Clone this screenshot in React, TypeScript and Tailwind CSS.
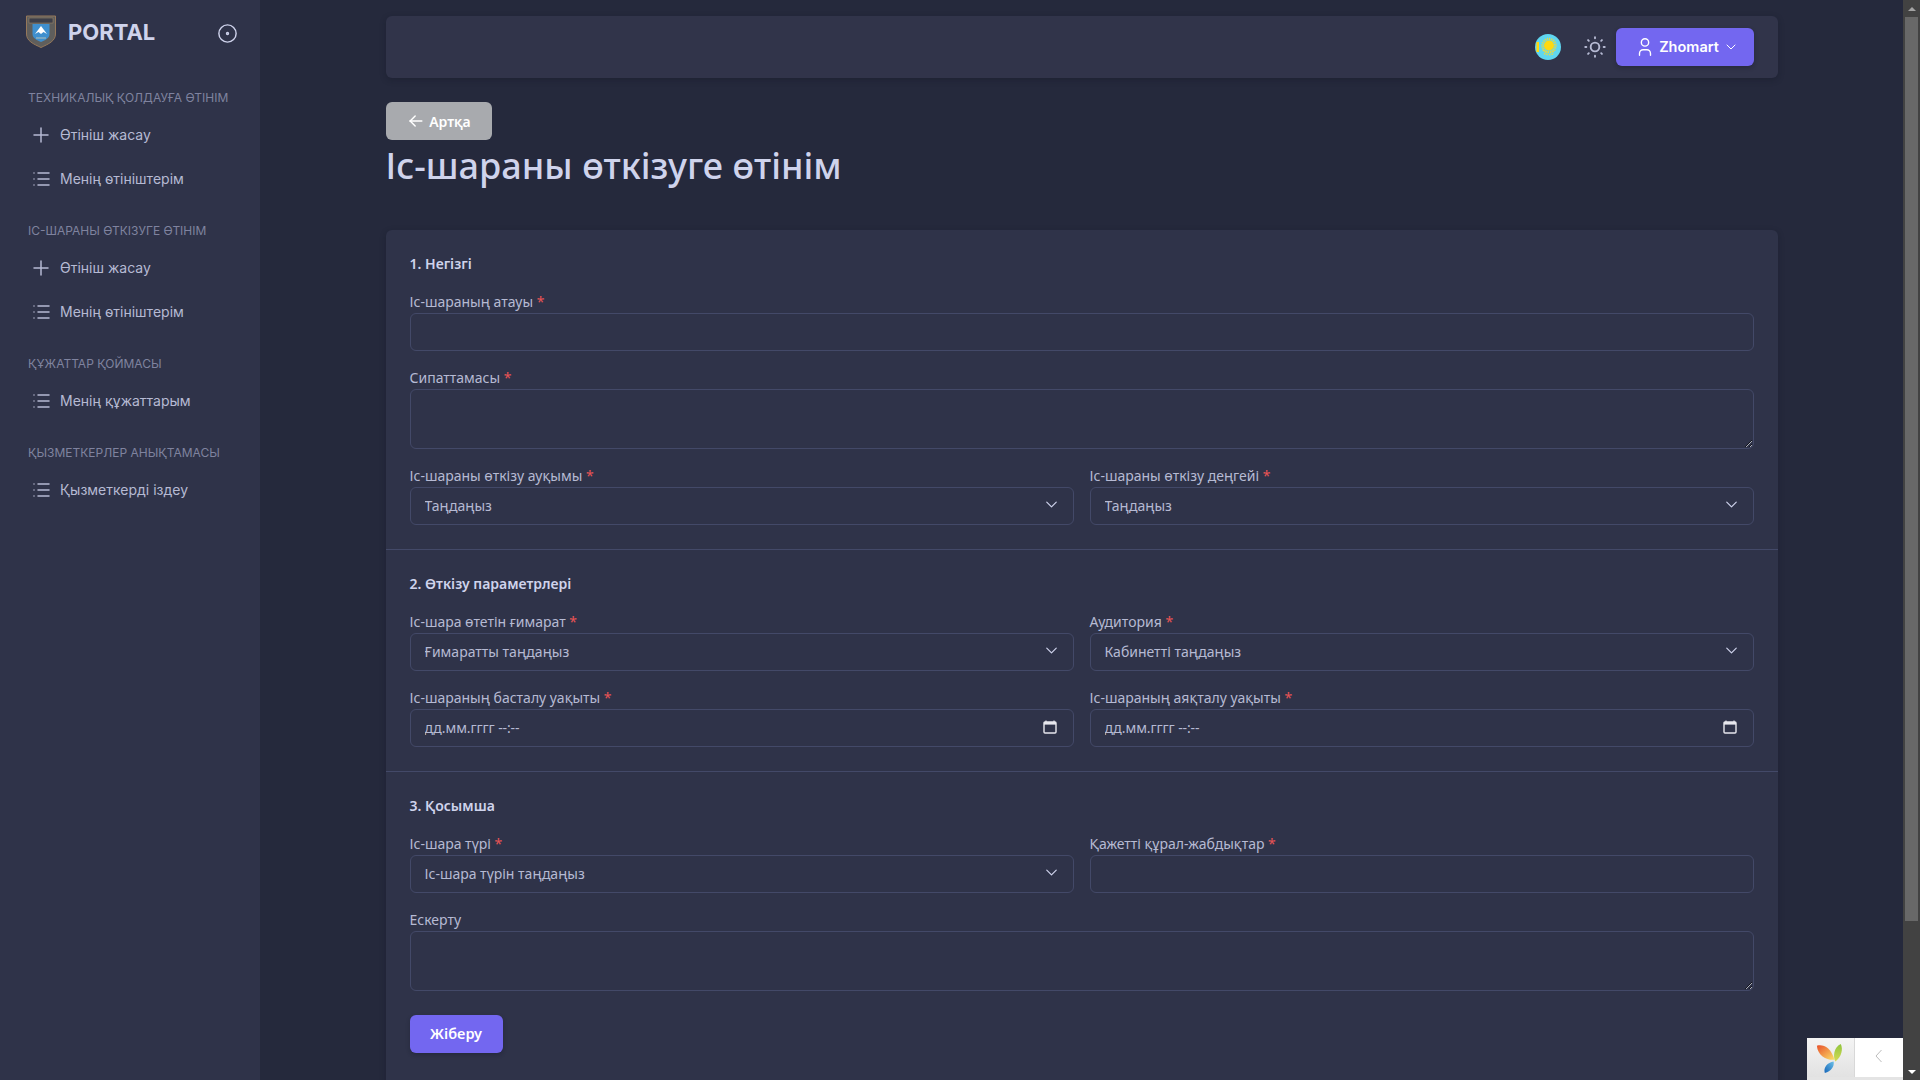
import { TbArrowLeft, TbChevronDown, TbCircleDot, TbList, TbPlus, TbSun, TbUser } from 'react-icons/tb';
import type { ReactNode } from 'react';

const sidebarSections = [
    {
        title: 'Техникалық қолдауға өтінім',
        items: [
            { label: 'Өтініш жасау', plus: true },
            { label: 'Менің өтініштерім', plus: false },
        ],
    },
    {
        title: 'Іс-шараны өткізуге өтінім',
        items: [
            { label: 'Өтініш жасау', plus: true },
            { label: 'Менің өтініштерім', plus: false },
        ],
    },
    {
        title: 'Құжаттар қоймасы',
        items: [{ label: 'Менің құжаттарым', plus: false }],
    },
    {
        title: 'Қызметкерлер анықтамасы',
        items: [{ label: 'Қызметкерді іздеу', plus: false }],
    },
];

function Emblem() {
    return (
        <svg width="30" height="33" viewBox="0 0 30 33" className="shrink-0">
            <path d="M0.5 1h29v18c0 7-7 10-14.5 13.5C7.500 29 0.5 26 0.5 19z" fill="#5f5e5c" stroke="#96785a" strokeWidth="1" />
            <rect x="3" y="3" width="24" height="5" fill="#3d3f4a" stroke="#a58a68" strokeWidth="0.5" />
            <path d="M6.500 9h17v10c0 4-4 6-8.500 8-4.500-2-8.500-4-8.500-8z" fill="#3f8fce" />
            <path d="M9 19l6-8 6 8-3.500-2-2.500 2-2.500-2z" fill="#ffffff" />
            <path d="M10 23h10" stroke="#8fb0c0" strokeWidth="1.500" />
        </svg>
    );
}

function Flag() {
    return (
        <svg width="26" height="26" viewBox="0 0 26 26" className="shrink-0">
            <circle cx="13" cy="13" r="13" fill="#5fd6f0" />
            <circle cx="14" cy="11.500" r="5" fill="#ffd90f" />
            <circle cx="14" cy="11.500" r="6.500" fill="none" stroke="#ecdc3c" strokeWidth="2.500" strokeDasharray="1 1" />
            <path d="M8 16c2 3 10 3 12 0M9 19.500c3 1.500 7 1.500 10 0" fill="none" stroke="#e3d94a" strokeWidth="1.500" strokeDasharray="1.500 1" />
            <rect x="1.500" y="8" width="2.500" height="10" fill="#ffd90f" />
        </svg>
    );
}

function CalendarIcon() {
    return (
        <svg width="14" height="14" viewBox="0 0 14 14" className="shrink-0">
            <path d="M3 0.500v1.500M11 0.500v1.500" stroke="#e8e8ee" strokeWidth="1.200" />
            <rect x="1" y="2" width="12" height="11" rx="1" fill="none" stroke="#e8e8ee" strokeWidth="1.400" />
            <rect x="1" y="2" width="12" height="2.600" fill="#e8e8ee" />
        </svg>
    );
}

function YiiLogo() {
    return (
        <svg width="30" height="30" viewBox="0 0 34 34">
            <defs>
                <linearGradient id="yiiOrange" x1="0" y1="0" x2="1" y2="1">
                    <stop offset="0" stopColor="#e8502a" />
                    <stop offset="1" stopColor="#fbe26a" />
                </linearGradient>
                <linearGradient id="yiiGreen" x1="0" y1="0" x2="0" y2="1">
                    <stop offset="0" stopColor="#8fc43c" />
                    <stop offset="1" stopColor="#d6dc55" />
                </linearGradient>
                <linearGradient id="yiiBlue" x1="1" y1="0" x2="0" y2="1">
                    <stop offset="0" stopColor="#6cc0e8" />
                    <stop offset="1" stopColor="#1565b8" />
                </linearGradient>
            </defs>
            <path d="M1 3c7-2 16 2 20 16C13 20 2 15 1 3z" fill="url(#yiiOrange)" />
            <path d="M28 1c3 6 1 14-6 20-3-6-2-16 6-20z" fill="url(#yiiGreen)" />
            <path d="M20 21c1 6-3 11-10 13-2-6 3-12 10-13z" fill="url(#yiiBlue)" />
        </svg>
    );
}

function Label({ text, required = true }: { text: string; required?: boolean }) {
    return (
        <label className="block h-[20px] text-[14px] leading-[22px] text-[#b6bad3]">
            {text}
            {required && <span className="text-[#ea5455]"> *</span>}
        </label>
    );
}

const fieldClass =
    'block w-full rounded-md border border-[#434968] bg-transparent px-[14px] text-[14px] text-[#b6bad3] outline-none';

function TextField({ label, required }: { label: string; required?: boolean }) {
    return (
        <div>
            <Label text={label} required={required} />
            <input type="text" className={`${fieldClass} mt-[2px] h-[38px]`} />
        </div>
    );
}

function TextArea({ label, required }: { label: string; required?: boolean }) {
    return (
        <div>
            <Label text={label} required={required} />
            <textarea className={`${fieldClass} mt-[2px] h-[60px] py-2`} />
        </div>
    );
}

function SelectField({ label, value }: { label: string; value: string }) {
    return (
        <div>
            <Label text={label} />
            <div className="relative mt-[2px]">
                <select className={`${fieldClass} h-[38px] appearance-none pb-[2px]`} defaultValue={value}>
                    <option value={value} className="bg-[#2f3349]">
                        {value}
                    </option>
                </select>
                <TbChevronDown
                    className="pointer-events-none absolute right-[13px] top-[8px] text-[#cfd3ec]"
                    size={19}
                    strokeWidth={1.5}
                />
            </div>
        </div>
    );
}

function DateField({ label }: { label: string }) {
    return (
        <div>
            <Label text={label} />
            <div className="relative mt-[2px]">
                <input
                    type="text"
                    readOnly
                    value="дд.мм.гггг --:--"
                    className={`${fieldClass} h-[38px] pb-[2px] tracking-[-0.1px]`}
                />
                <span className="pointer-events-none absolute right-[17px] top-[11px]">
                    <CalendarIcon />
                </span>
            </div>
        </div>
    );
}

function SectionTitle({ children }: { children: ReactNode }) {
    return <h6 className="h-[20px] text-[14px] font-semibold leading-[20px] text-[#cfd3ec]">{children}</h6>;
}

function Sidebar() {
    return (
        <aside className="z-10 flex h-full w-[260px] shrink-0 flex-col bg-[#2f3349] font-['Inter',sans-serif]">
            <div className="flex h-[88px] items-start pl-[26px] pr-[21px] pt-[15px]">
                <Emblem />
                <span className="ml-[12px] mt-[3px] text-[22px] font-bold leading-[28px] text-[#cfd3ec]">PORTAL</span>
                <TbCircleDot className="ml-auto mt-[7px] text-[#cfd3ec]" size={23} strokeWidth={1.5} />
            </div>
            <nav className="flex flex-col gap-[21px]">
                {sidebarSections.map((section) => (
                    <div key={section.title}>
                        <div className="h-[20px] pl-[28px] text-[12px] uppercase leading-[20px] text-[#7f839f]">
                            {section.title}
                        </div>
                        <ul className="mt-[4px]">
                            {section.items.map((item) => (
                                <li
                                    key={item.label}
                                    className="flex h-[44px] items-center pl-[29px] text-[14px] text-[#b6bad3]"
                                >
                                    {item.plus ? (
                                        <TbPlus size={24} strokeWidth={1.5} className="mt-[2px] shrink-0" />
                                    ) : (
                                        <TbList size={24} strokeWidth={1.5} className="mt-[2px] shrink-0" />
                                    )}
                                    <span className="ml-[7px]">{item.label}</span>
                                </li>
                            ))}
                        </ul>
                    </div>
                ))}
            </nav>
        </aside>
    );
}

function Scrollbar() {
    return (
        <div className="flex h-full w-[17px] shrink-0 flex-col bg-[#424242]">
            <div className="flex h-[17px] items-center justify-center">
                <div className="h-0 w-0 border-x-[4px] border-b-[4px] border-x-transparent border-b-[#a3a3a3]" />
            </div>
            <div className="mx-auto h-[904px] w-[13px] bg-[#686868]" />
            <div className="mt-auto flex h-[17px] items-center justify-center">
                <div className="h-0 w-0 border-x-[4px] border-t-[4px] border-x-transparent border-t-white" />
            </div>
        </div>
    );
}

export default function App() {
    return (
        <div className="relative flex h-screen overflow-hidden bg-[#25293c] font-['Noto_Sans',sans-serif]">
            <Sidebar />
            <main className="min-w-0 flex-1 overflow-hidden pt-4">
                <div className="mx-auto w-[1392px]">
                    <header className="flex h-[62px] items-center justify-end rounded-md bg-[#31344a] pr-6 shadow-[0_2px_6px_rgba(15,20,34,0.3)]">
                        <Flag />
                        <TbSun className="ml-[21px] text-[#b6bad3]" size={26} strokeWidth={1.75} />
                        <button className="ml-[8px] flex h-[38px] w-[138px] items-center justify-center rounded-md bg-[#7367f0] pl-[4px] font-['Inter',sans-serif] text-[14.5px] font-semibold text-white shadow-[0_2px_4px_rgba(15,20,34,0.3)]">
                            <TbUser size={22} strokeWidth={1.5} />
                            <span className="ml-[3px]">Zhomart</span>
                            <TbChevronDown size={16} strokeWidth={1.5} className="ml-[4px]" />
                        </button>
                    </header>

                    <button className="mt-6 flex h-[38px] w-[106px] items-center justify-center rounded-md bg-[#a8aaae] text-[14px] font-semibold text-white">
                        <TbArrowLeft size={20} strokeWidth={1.75} />
                        <span className="ml-[3px]">Артқа</span>
                    </button>
                    <h1 className="mt-[2px] h-[50px] text-[36px] font-medium leading-[48px] text-[#cfd3ec]">
                        Іс-шараны өткізуге өтінім
                    </h1>

                    <form className="mt-[38px] rounded-md bg-[#2f3349] pb-12 shadow-[0_2px_6px_rgba(15,20,34,0.3)]">
                        <section className="px-6 pt-6">
                            <SectionTitle>1. Негізгі</SectionTitle>
                            <div className="mt-[17px] flex flex-col gap-[16px]">
                                <TextField label="Іс-шараның атауы" required />
                                <TextArea label="Сипаттамасы" required />
                                <div className="grid grid-cols-2 gap-4">
                                    <SelectField label="Іс-шараны өткізу ауқымы" value="Таңдаңыз" />
                                    <SelectField label="Іс-шараны өткізу деңгейі" value="Таңдаңыз" />
                                </div>
                            </div>
                        </section>
                        <hr className="mt-6 border-[#434968]" />
                        <section className="px-6 pt-6">
                            <SectionTitle>2. Өткізу параметрлері</SectionTitle>
                            <div className="mt-[17px] grid grid-cols-2 gap-x-4 gap-y-[16px]">
                                <SelectField label="Іс-шара өтетін ғимарат" value="Ғимаратты таңдаңыз" />
                                <SelectField label="Аудитория" value="Кабинетті таңдаңыз" />
                                <DateField label="Іс-шараның басталу уақыты" />
                                <DateField label="Іс-шараның аяқталу уақыты" />
                            </div>
                        </section>
                        <hr className="mt-6 border-[#434968]" />
                        <section className="px-6 pt-6">
                            <SectionTitle>3. Қосымша</SectionTitle>
                            <div className="mt-[17px] flex flex-col gap-[16px]">
                                <div className="grid grid-cols-2 gap-4">
                                    <SelectField label="Іс-шара түрі" value="Іс-шара түрін таңдаңыз" />
                                    <TextField label="Қажетті құрал-жабдықтар" required />
                                </div>
                                <TextArea label="Ескерту" required={false} />
                            </div>
                            <button
                                type="button"
                                className="mt-6 flex h-[38px] w-[93px] items-center justify-center rounded-md bg-[#7367f0] pb-[1px] text-[14.5px] font-semibold text-white shadow-[0_2px_4px_rgba(15,20,34,0.3)]"
                            >
                                Жіберу
                            </button>
                        </section>
                    </form>
                </div>
            </main>
            <Scrollbar />

            <div className="absolute bottom-0 right-[17px] flex h-[42px] w-[96px] border-b-[3px] border-[#e4e4e4] bg-white">
                <div className="flex w-[48px] items-center justify-center border-r border-[#d8d8d8] bg-gradient-to-b from-[#f4f4f4] to-[#e2e2e2]">
                    <YiiLogo />
                </div>
                <div className="flex flex-1 items-center justify-center pb-[4px] text-[#bdbdbd]">
                    <svg width="8" height="14" viewBox="0 0 8 14" fill="none" stroke="currentColor" strokeWidth="1">
                        <path d="M6.5 1L1 7l5.5 6" />
                    </svg>
                </div>
            </div>
        </div>
    );
}
